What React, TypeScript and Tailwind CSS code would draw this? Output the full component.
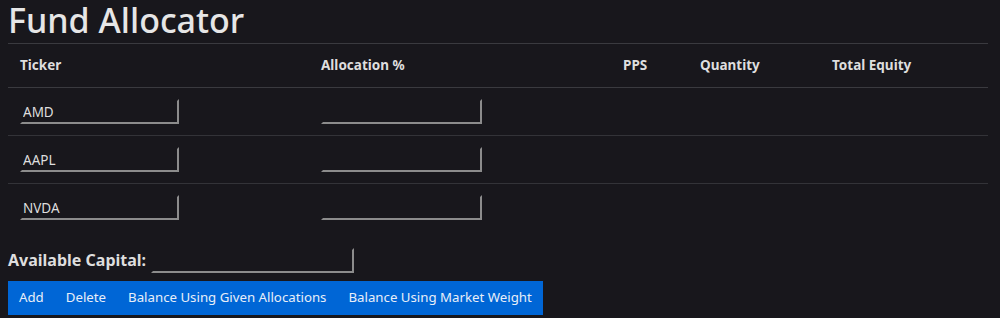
import { useState } from 'react'

// ── Types ──────────────────────────────────────────────────────────────────────

type Holding = {
  ticker: string
  allocation: string
}

const FONT = 'font-["Noto_Sans","Open_Sans",sans-serif]'

// inset-looking text field, light edge on bottom/right only
function Field({ value, width, onChange }: { value: string; width: string; onChange: (v: string) => void }) {
  return (
    <input
      type="text"
      value={value}
      onChange={(e) => onChange(e.target.value)}
      className={`${width} h-[25px] bg-transparent border-2 border-t-[#18171c] border-l-[#18171c] border-b-[#8c8c8c] border-r-[#8c8c8c] px-px text-[13.5px] text-[#dedede] outline-none`}
    />
  )
}

// ── Main component ─────────────────────────────────────────────────────────────

export default function App() {
  const [rows, setRows] = useState<Holding[]>([
    { ticker: 'AMD', allocation: '' },
    { ticker: 'AAPL', allocation: '' },
    { ticker: 'NVDA', allocation: '' },
  ])
  const [capital, setCapital] = useState('')

  const update = (i: number, key: keyof Holding, v: string) =>
    setRows((rs) => rs.map((r, j) => (j === i ? { ...r, [key]: v } : r)))

  return (
    <div className={`min-h-[318px] bg-[#18171c] px-2 text-[#dedede] ${FONT}`}>
      {/* Header */}
      <h1 className="h-[43px] text-[34px] leading-[40px] font-medium text-[#e6e6e6]">Fund Allocator</h1>

      {/* Table */}
      <table className="w-[980px] border-collapse text-[13.5px]">
        <thead>
          <tr className="h-[44px] border-y border-[#3a3a3f]">
            <th className="w-[301px] px-3 text-left font-bold">Ticker</th>
            <th className="w-[302px] px-3 text-left font-bold">Allocation %</th>
            <th className="w-[77px] px-3 text-left font-bold">PPS</th>
            <th className="w-[132px] px-3 text-left font-bold">Quantity</th>
            <th className="px-3 text-left font-bold">Total Equity</th>
          </tr>
        </thead>
        <tbody>
          {rows.map((r, i) => (
            <tr key={i} className={`h-[48px] ${i < rows.length - 1 ? 'border-b border-[#333338]' : ''}`}>
              <td className="px-3">
                <Field value={r.ticker} width="w-[159px]" onChange={(v) => update(i, 'ticker', v)} />
              </td>
              <td className="px-3">
                <Field value={r.allocation} width="w-[161px]" onChange={(v) => update(i, 'allocation', v)} />
              </td>
              <td />
              <td />
              <td />
            </tr>
          ))}
        </tbody>
      </table>

      {/* Capital */}
      <div className="mt-4 flex items-center gap-[5px]">
        <label className="text-[16px] font-bold">Available Capital:</label>
        <Field value={capital} width="w-[203px]" onChange={setCapital} />
      </div>

      {/* Actions */}
      <div className="mt-2 flex h-[34px] w-fit items-stretch bg-[#0066d6] text-[13.25px] text-[#e8eef8]">
        <button className="px-[11px]" onClick={() => setRows((rs) => [...rs, { ticker: '', allocation: '' }])}>Add</button>
        <button className="px-[11px]" onClick={() => setRows((rs) => rs.slice(0, -1))}>Delete</button>
        <button className="px-[11px]">Balance Using Given Allocations</button>
        <button className="px-[11px]">Balance Using Market Weight</button>
      </div>
    </div>
  )
}
